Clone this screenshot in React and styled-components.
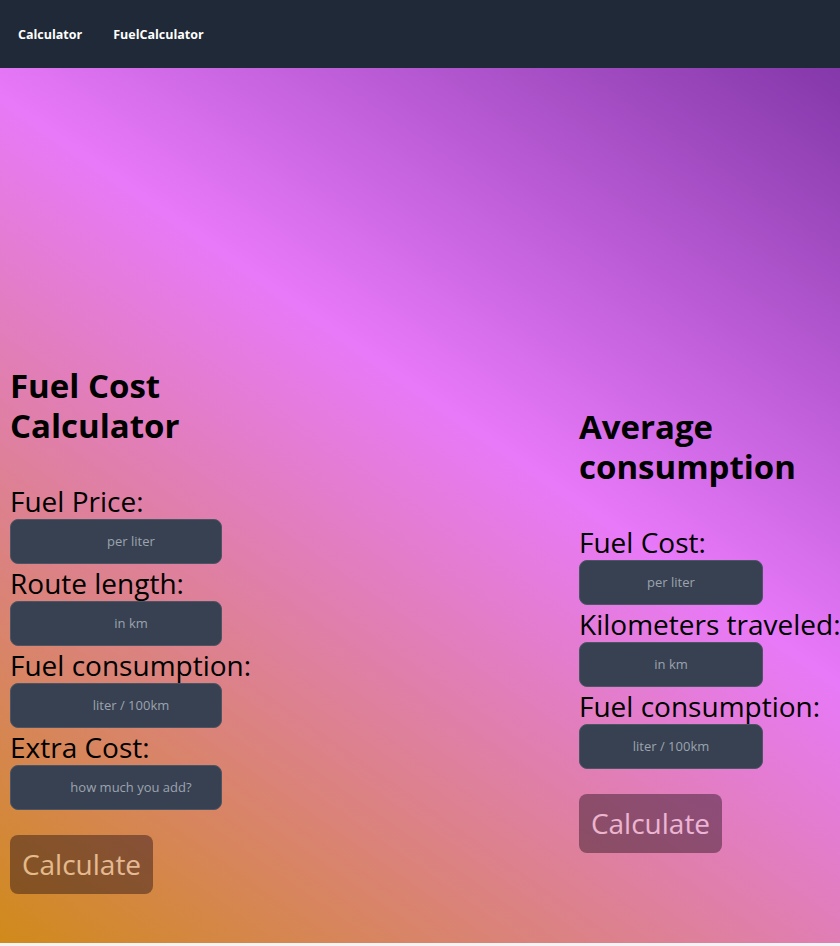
import React from "react";
import styled, { createGlobalStyle } from "styled-components";

const GlobalStyle = createGlobalStyle`
  html, body {
    margin: 0;
    padding: 0;
    background: #f3f4f6;
    font-family: "Open Sans", "Noto Sans", sans-serif;
  }
`;

const leftFields = [
  { label: "Fuel Price:", placeholder: "per liter" },
  { label: "Route length:", placeholder: "in km" },
  { label: "Fuel consumption:", placeholder: "liter / 100km" },
  { label: "Extra Cost:", placeholder: "how much you add?" },
];

const rightFields = [
  { label: "Fuel Cost:", placeholder: "per liter" },
  { label: "Kilometers traveled:", placeholder: "in km" },
  { label: "Fuel consumption:", placeholder: "liter / 100km" },
];

export default function App() {
  return (
    <>
      <GlobalStyle />
      <Nav>
        <NavLink href="#">Calculator</NavLink>
        <NavLink href="#">FuelCalculator</NavLink>
      </Nav>
      <Main>
        <Column $width="212px">
          <Title>Fuel Cost Calculator</Title>
          {leftFields.map((f) => (
            <Field key={f.label}>
              <Label>{f.label}</Label>
              <Input $width="212px" $shift placeholder={f.placeholder} />
            </Field>
          ))}
          <Button>Calculate</Button>
        </Column>
        <Column $width="261px">
          <Title>Average consumption</Title>
          {rightFields.map((f) => (
            <Field key={f.label}>
              <Label>{f.label}</Label>
              <Input $width="184px" placeholder={f.placeholder} />
            </Field>
          ))}
          <Button>Calculate</Button>
        </Column>
      </Main>
    </>
  );
}

const Nav = styled.nav`
  height: 68px;
  background-color: #1f2937;
  display: flex;
  align-items: center;
  gap: 31px;
  padding-left: 18px;
`;

const NavLink = styled.a`
  color: white;
  font-size: 12.5px;
  font-weight: 700;
  text-decoration: none;
`;

const Main = styled.main`
  height: 875px;
  box-sizing: border-box;
  padding: 248px 0 0 10px;
  display: flex;
  justify-content: space-between;
  align-items: center;
  overflow: hidden;
  background: linear-gradient(35deg, #d08a1a 0%, #e879f9 58%, #8438aa 100%);
`;

const Column = styled.div`
  width: ${(p) => p.$width};
  display: flex;
  flex-direction: column;
  align-items: flex-start;
`;

const Title = styled.h1`
  margin: 0 0 36px 0;
  font-size: 33px;
  line-height: 40px;
  font-weight: 700;
  color: black;
`;

const Field = styled.div`
  display: flex;
  flex-direction: column;
`;

const Label = styled.label`
  font-size: 28px;
  line-height: 37px;
  color: black;
  white-space: nowrap;
  transform: translateY(1px);
`;

const Input = styled.input`
  width: ${(p) => p.$width};
  height: 45px;
  box-sizing: border-box;
  border: 1px solid #4b5563;
  border-radius: 8px;
  background-color: #374151;
  color: white;
  font-family: inherit;
  font-size: 13px;
  text-align: center;
  padding: ${(p) => (p.$shift ? "0 10px 0 40px" : "0 10px")};
  outline: none;

  &::placeholder {
    color: #9ca3af;
  }
`;

const Button = styled.button`
  margin-top: 25px;
  width: 143px;
  height: 59px;
  padding: 0;
  border: none;
  border-radius: 8px;
  background-color: #1a0a14;
  color: white;
  opacity: 0.42;
  font-family: inherit;
  font-size: 28px;
  cursor: pointer;
`;
